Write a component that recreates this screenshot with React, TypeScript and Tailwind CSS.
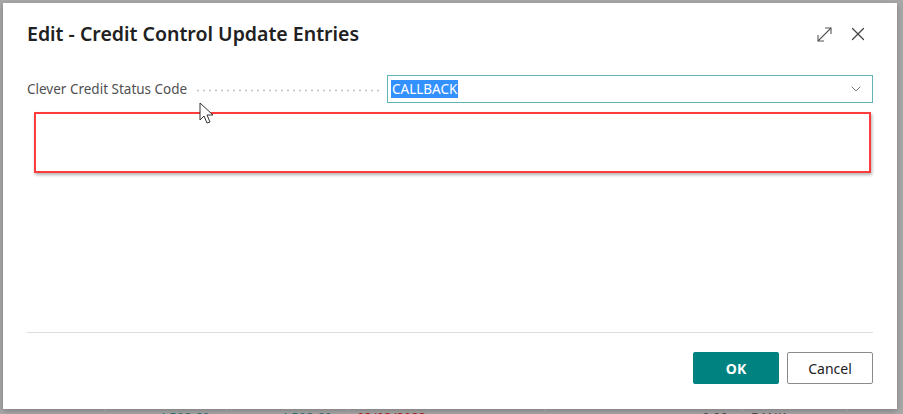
import { X, ChevronDown } from "lucide-react"

function ExpandIcon() {
  return (
    <svg width="17" height="17" viewBox="0 0 17 17" fill="none" stroke="#555" strokeWidth="1.1">
      <path d="M2 15 L15 2" />
      <path d="M9 2 H15 V8" />
      <path d="M2 9 V15 H8" />
    </svg>
  )
}

function Cursor() {
  return (
    <svg width="18" height="24" viewBox="0 0 18 24" className="absolute left-[199px] top-[102px]">
      <path d="M1 1 L1 18 L5 14 L8 21 L11 20 L8 13 L14 13 Z" fill="white" stroke="#333" strokeWidth="1" strokeLinejoin="round" />
    </svg>
  )
}

function App() {
  return (
    <div className="w-[903px] h-[414px] bg-[#a8a8a8] overflow-hidden relative" style={{ fontFamily: '"Noto Sans", "Open Sans", sans-serif' }}>
      <div className="pt-[3px] pl-[3px]">
        <div className="w-[894px] h-[406px] bg-white shadow-[0_2px_6px_rgba(0,0,0,0.25)] flex flex-col px-[24px]">
          <div className="flex items-center justify-between h-[60px] pt-[2px]">
            <h1 className="text-[19.5px] font-semibold text-[#212121]">Edit - Credit Control Update Entries</h1>
            <div className="flex items-center gap-[14px] pr-[4px]">
              <ExpandIcon />
              <X size={22} strokeWidth={1.3} color="#444" />
            </div>
          </div>
          <div className="flex items-center mt-[12px] h-[28px]">
            <span className="text-[13.5px] text-[#505050] whitespace-nowrap">Clever Credit Status Code</span>
            <div className="flex-1 ml-[8px] mr-[8px] h-[3px] mt-[3px] bg-[radial-gradient(circle,#c4c4c4_0.9px,transparent_1.2px)] bg-[length:6px_3px]" />
            <div className="w-[486px] h-[28px] border border-[#62b3b3] flex items-center justify-between pl-[3px] pr-[8px]">
              <span className="bg-[#3390ff] text-white text-[13.5px] leading-[18px] px-[1px]">CALLBACK</span>
              <ChevronDown size={16} strokeWidth={1.2} color="#555" />
            </div>
          </div>
          <div className="mt-[9px] ml-[7px] mr-[2px] h-[61px] border-2 border-[#ff3c3c] shadow-[1px_2px_3px_rgba(0,0,0,0.3)]" />
          <div className="flex-1" />
          <div className="border-t border-[#dedede]" />
          <div className="flex justify-end gap-[8px] pt-[19px] pb-[25px]">
            <button className="w-[86px] h-[32px] bg-[#008380] text-white text-[14px] font-bold rounded-[2px]">OK</button>
            <button className="w-[86px] h-[32px] bg-white text-[#212121] text-[14px] border border-[#8a8a8a] rounded-[2px]">Cancel</button>
          </div>
        </div>
      </div>
      <div className="absolute left-0 top-[409px] w-[903px] h-[5px] flex text-[13px] leading-none">
        <div className="w-[105px] border-r border-[#999]" />
        <div className="w-[122px] border-r border-[#999] text-right pr-[16px] pt-[2px] text-[#2f6b6b]">4 592.60</div>
        <div className="w-[122px] border-r border-[#999] text-right pr-[16px] pt-[2px] text-[#2f6b6b]">4 592.60</div>
        <div className="w-[196px] border-r border-[#999] pl-[8px] pt-[2px] text-[#a32020]">03/03/2023</div>
        <div className="w-[198px] border-r border-[#999] text-right pr-[14px] pt-[2px] text-[#444]">0.00</div>
        <div className="w-[105px] border-r border-[#999] pl-[8px] pt-[2px] text-[#444]">BANK</div>
      </div>
      <Cursor />
    </div>
  )
}

export default App
